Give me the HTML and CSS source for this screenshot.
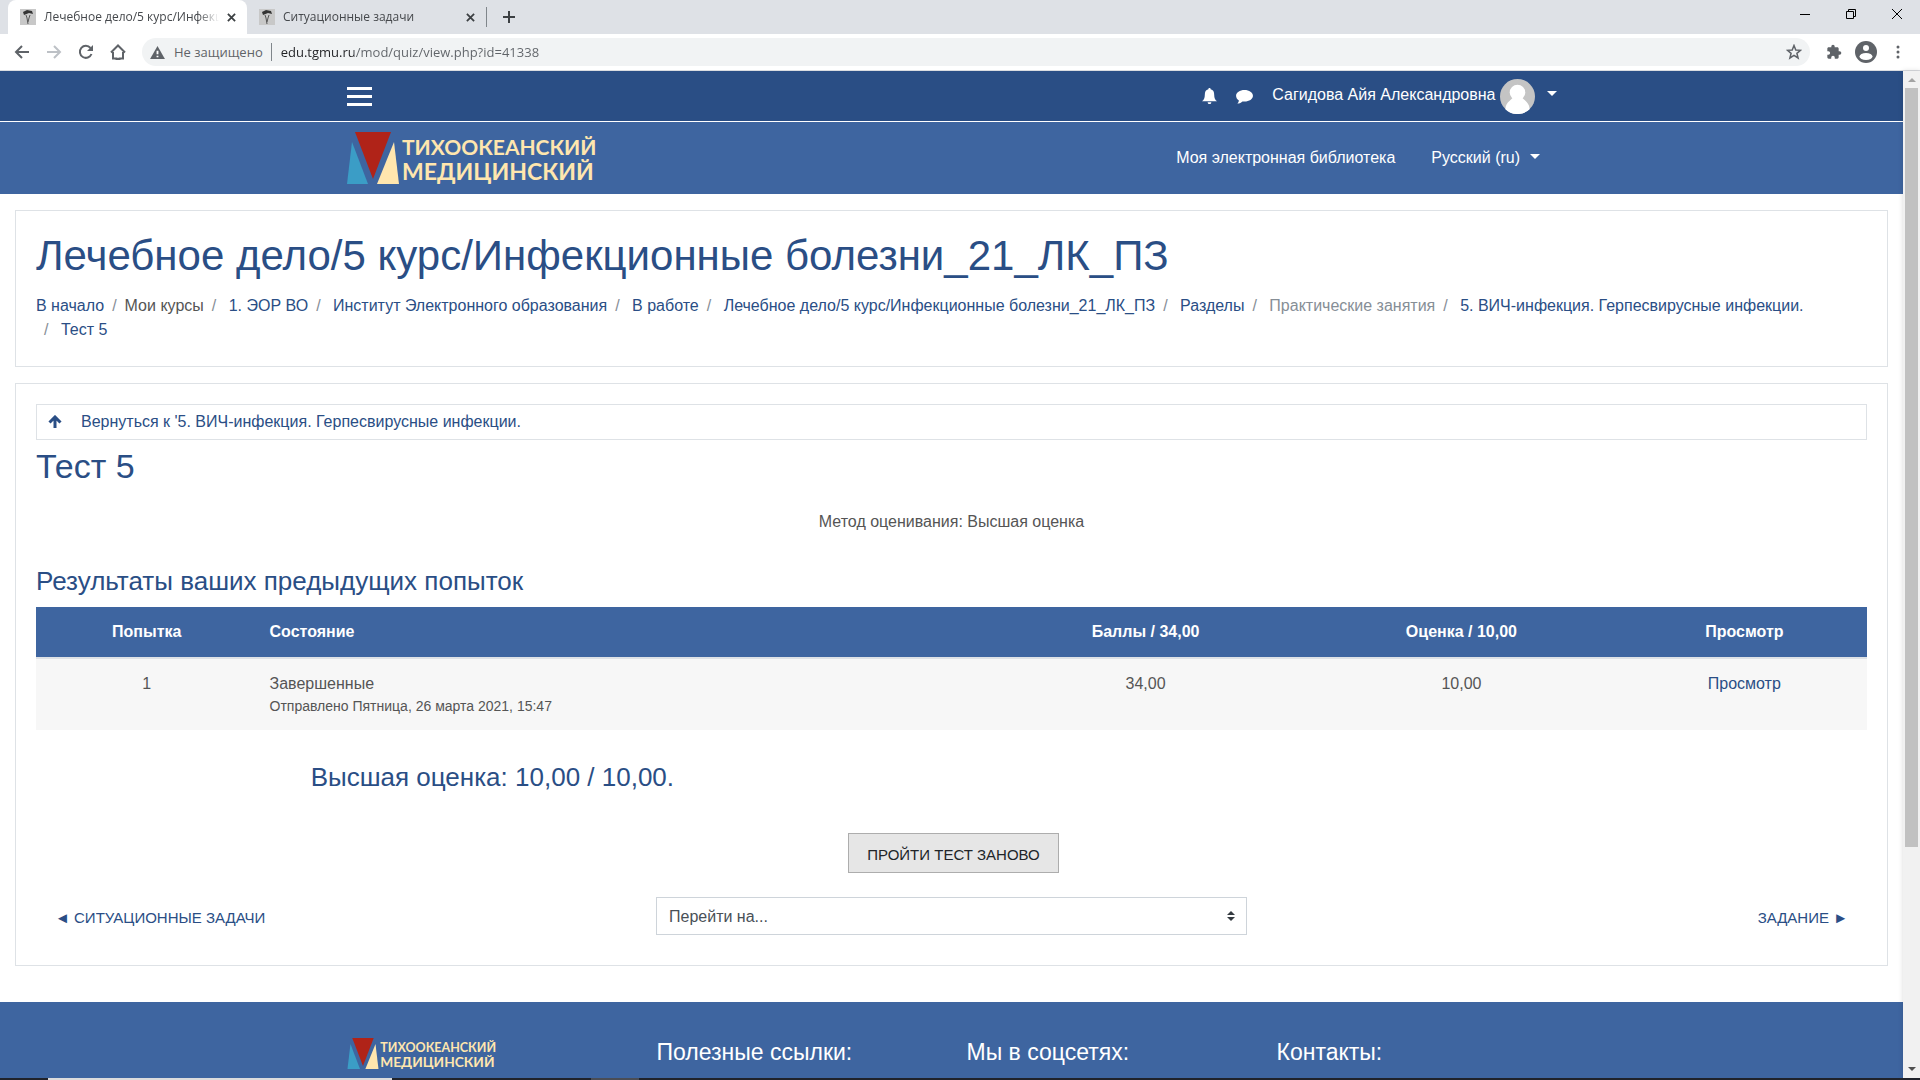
FILE: index.html
```html
<!DOCTYPE html>
<html lang="ru">
<head>
    <meta charset="UTF-8">
    <meta name="viewport" content="width=device-width, initial-scale=1.0">
    <title>Лечебное дело/5 курс/Инфекционные болезни_21_ЛК_ПЗ</title>
    <link rel="stylesheet" href="styles.css">
</head>
<body>
    <!-- Вкладки -->
    <div class="tabs">
        <div class="tab active">
            <svg class="favicon" viewBox="0 0 16 16"><rect width="16" height="16" fill="#c8c8c8"/><path d="M3 3l4-2 5 1 1 3-4-1-5 2z" fill="#333"/><path d="M6 6l1 3 1 6M10 6l-1 3-1 4" fill="none" stroke="#555"/></svg>
            <span class="tab-title">Лечебное дело/5 курс/Инфекци</span>
            <button class="tab-close" aria-label="Закрыть"><svg viewBox="0 0 10 10"><path d="M1 1l8 8M9 1L1 9"/></svg></button>
        </div>
        <div class="tab">
            <svg class="favicon" viewBox="0 0 16 16"><rect width="16" height="16" fill="#c8c8c8"/><path d="M3 3l4-2 5 1 1 3-4-1-5 2z" fill="#333"/><path d="M6 6l1 3 1 6M10 6l-1 3-1 4" fill="none" stroke="#555"/></svg>
            <span class="tab-title">Ситуационные задачи</span>
            <button class="tab-close" aria-label="Закрыть"><svg viewBox="0 0 10 10"><path d="M1 1l8 8M9 1L1 9"/></svg></button>
        </div>
        <button class="tab-new" aria-label="Новая вкладка"><svg viewBox="0 0 12 12"><path d="M6 0v12M0 6h12"/></svg></button>
        <div class="window-buttons">
            <button aria-label="Свернуть"><svg viewBox="0 0 10 10"><path d="M0 5.5h10"/></svg></button>
            <button aria-label="Развернуть"><svg viewBox="0 0 10 10"><path d="M.5 2.5h7v7h-7zM2.5 2.5v-2h7v7h-2"/></svg></button>
            <button aria-label="Закрыть окно"><svg viewBox="0 0 10 10"><path d="M0 0l10 10M10 0L0 10"/></svg></button>
        </div>
    </div>

    <!-- Адресная строка -->
    <div class="toolbar">
        <button aria-label="Назад"><svg viewBox="0 0 16 16"><path d="M15 8H2M8 2L2 8l6 6"/></svg></button>
        <button class="disabled" aria-label="Вперед"><svg viewBox="0 0 16 16"><path d="M1 8h13M8 2l6 6-6 6"/></svg></button>
        <button aria-label="Обновить"><svg viewBox="0 0 16 16"><path d="M13.5 10A6 6 0 1 1 12.500 4"/><path class="fill" d="M15 1v6H9z"/></svg></button>
        <button aria-label="Домой"><svg viewBox="0 0 16 16"><path d="M1 8.500L8 1.500l7 7M3 8v6.500h3.500V15h3v-.5H13V8"/></svg></button>
        <div class="address">
            <svg class="warn" viewBox="0 0 16 14"><path d="M8 0l8 14H0z" fill="#5f6368"/><path d="M8 5v4M8 10.500V12" stroke="#fff" stroke-width="2"/></svg>
            <label for="url">Не защищено</label>
            <input type="text" id="url" value="edu.tgmu.ru/mod/quiz/view.php?id=41338">
            <svg class="star" viewBox="0 0 16 16"><path d="M8 1.500l1.800 4.500 4.700.3-3.600 3 1.200 4.700L8 11.400 3.900 14l1.200-4.700-3.600-3L6.200 6z"/></svg>
        </div>
        <div class="toolbar-right">
            <button aria-label="Расширения"><svg viewBox="0 0 24 24"><path class="fill" d="M20.500 11H19V7c0-1.100-.9-2-2-2h-4V3.500a2.500 2.500 0 0 0-5 0V5H4c-1.100 0-2 .9-2 2v3.800h1.500a2.700 2.700 0 0 1 0 5.400H2V20c0 1.100.9 2 2 2h3.800v-1.500a2.700 2.700 0 0 1 5.400 0V22H17c1.100 0 2-.9 2-2v-4h1.500a2.500 2.500 0 0 0 0-5z"/></svg></button>
            <button class="profile" aria-label="Профиль"><svg viewBox="0 0 22 22"><circle class="fill" cx="11" cy="11" r="11"/><circle cx="11" cy="7" r="3" fill="#fff" stroke="none"/><ellipse cx="11" cy="15.500" rx="6.500" ry="3.500" fill="#fff" stroke="none"/></svg></button>
            <button aria-label="Меню"><svg viewBox="0 0 16 16"><circle class="fill" cx="8" cy="3" r="1.500"/><circle class="fill" cx="8" cy="8" r="1.500"/><circle class="fill" cx="8" cy="13" r="1.500"/></svg></button>
        </div>
    </div>

    <div class="viewport">
        <div class="page">
            <header>
                <div class="topbar">
                    <div class="container">
                        <button class="burger" aria-label="Меню"><span></span><span></span><span></span></button>
                        <div class="user-menu">
                            <a href="#" aria-label="Уведомления"><svg class="bell" viewBox="0 0 16 18"><path d="M8 0c.8 0 1.200.6 1.200 1.300C12 2 13 4 13 7c0 3.500 1 5.500 3 7H0c2-1.500 3-3.500 3-7 0-3 1-5 3.800-5.700C6.800.6 7.200 0 8 0zM6 15h4a2 2 0 0 1-4 0z"/></svg></a>
                            <a href="#" aria-label="Сообщения"><svg class="comment" viewBox="0 0 18 16"><path d="M9 1c5 0 9 2.700 9 6.200s-4 6.200-9 6.200c-.7 0-1.500 0-2.200-.2C5 14.800 3 15.500 1.300 15.500c1-.9 1.500-1.800 1.700-3.300C1.200 11 0 9.200 0 7.200 0 3.700 4 1 9 1z"/></svg></a>
                            <a href="#" class="user">
                                <span>Сагидова Айя Александровна</span>
                                <svg class="avatar" viewBox="0 0 36 36"><circle cx="18" cy="18" r="18" fill="#c4c4c4"/><circle cx="18" cy="14" r="8" fill="#fff"/><path d="M13 19h10c0 2 7 4 7.500 12A18 18 0 0 1 5.500 31C6 23 13 21 13 19z" fill="#fff"/></svg>
                                <i class="caret"></i>
                            </a>
                        </div>
                    </div>
                </div>
                <div class="navbar">
                    <div class="container">
                        <a href="#" class="logo"><svg viewBox="0 0 250 52" role="img">
                            <path d="M5 10l16 42H0z" fill="#3b9dc6"/><path d="M8 0h36L26 47z" fill="#b02318"/><path d="M47 10l5 42H30z" fill="#ffe6ae"/>
                            <text x="55" y="23">ТИХООКЕАНСКИЙ</text><text x="55" y="48" class="second">МЕДИЦИНСКИЙ</text>
                        </svg></a>
                        <nav>
                            <a href="#">Моя электронная библиотека</a>
                            <a href="#">Русский (ru) <i class="caret"></i></a>
                        </nav>
                    </div>
                </div>
            </header>

            <div class="card page-header">
                <h1>Лечебное дело/5 курс/Инфекционные болезни_21_ЛК_ПЗ</h1>
                <ol class="breadcrumb">
                    <li><a href="#">В начало</a></li>
                    <li>Мои курсы</li>
                    <li class="sub"><a href="#">1. ЭОР ВО</a></li>
                    <li class="sub"><a href="#">Институт Электронного образования</a></li>
                    <li class="sub"><a href="#">В работе</a></li>
                    <li class="sub"><a href="#">Лечебное дело/5 курс/Инфекционные болезни_21_ЛК_ПЗ</a></li>
                    <li class="sub"><a href="#">Разделы</a></li>
                    <li class="sub dimmed"><span>Практические занятия</span></li>
                    <li class="sub"><a href="#">5. ВИЧ-инфекция. Герпесвирусные инфекции.</a></li>
                    <li class="sub"><a href="#">Тест 5</a></li>
                </ol>
            </div>

            <main class="card">
                <a href="#" class="back-link">
                    <svg viewBox="0 0 14 14"><path d="M7 13V2M1.500 7.500L7 2l5.500 5.500"/></svg>
                    Вернуться к '5. ВИЧ-инфекция. Герпесвирусные инфекции.
                </a>
                <h2>Тест 5</h2>
                <p class="quiz-info">Метод оценивания: Высшая оценка</p>

                <h3>Результаты ваших предыдущих попыток</h3>
                <table>
                    <thead>
                        <tr>
                            <th class="col-attempt">Попытка</th>
                            <th class="col-state">Состояние</th>
                            <th class="col-marks">Баллы / 34,00</th>
                            <th class="col-grade">Оценка / 10,00</th>
                            <th>Просмотр</th>
                        </tr>
                    </thead>
                    <tbody>
                        <tr>
                            <td>1</td>
                            <td class="col-state">Завершенные<span class="state-details">Отправлено Пятница, 26 марта 2021, 15:47</span></td>
                            <td>34,00</td>
                            <td>10,00</td>
                            <td><a href="#">Просмотр</a></td>
                        </tr>
                    </tbody>
                </table>

                <h3 class="feedback">Высшая оценка: 10,00 / 10,00.</h3>
                <div class="attempt">
                    <button type="submit">Пройти тест заново</button>
                </div>

                <div class="activity-nav">
                    <a href="#">◄ Ситуационные задачи</a>
                    <div class="jump">
                        <select aria-label="Перейти на...">
                            <option>Перейти на...</option>
                        </select>
                        <svg viewBox="0 0 8 10"><path d="M4 0l4 4H0zM4 10L0 6h8z"/></svg>
                    </div>
                    <a href="#" class="next">Задание ►</a>
                </div>
            </main>

            <footer>
                <div class="container">
                    <div class="footer-col">
                        <a href="#" class="logo small"><svg viewBox="0 0 250 52" role="img">
                            <path d="M5 10l16 42H0z" fill="#3b9dc6"/><path d="M8 0h36L26 47z" fill="#b02318"/><path d="M47 10l5 42H30z" fill="#ffe6ae"/>
                            <text x="55" y="23">ТИХООКЕАНСКИЙ</text><text x="55" y="48" class="second">МЕДИЦИНСКИЙ</text>
                        </svg></a>
                    </div>
                    <div class="footer-col"><h4>Полезные ссылки:</h4></div>
                    <div class="footer-col"><h4>Мы в соцсетях:</h4></div>
                    <div class="footer-col"><h4>Контакты:</h4></div>
                </div>
            </footer>
        </div>

        <div class="scrollbar">
            <svg class="up" viewBox="0 0 8 4"><path d="M4 0l4 4H0z"/></svg>
            <div class="track"><div class="thumb"></div></div>
            <svg class="down" viewBox="0 0 8 4"><path d="M0 0h8L4 4z"/></svg>
        </div>
    </div>
    <div class="taskbar"><span class="task-open"></span><span class="task"></span></div>
</body>
</html>
```
FILE: styles.css
```css
* {
    box-sizing: border-box;
}

body {
    display: flex;
    flex-direction: column;
    height: 100vh;
    margin: 0;
    overflow: hidden;
    font-family: "Liberation Sans", Arial, sans-serif;
    font-size: 16px;
    line-height: 24px;
    color: #555;
    background-color: #fff;
}

a {
    color: #2a4e85;
    text-decoration: none;
}

button {
    padding: 0;
    border: none;
    background: none;
    font-family: inherit;
    cursor: pointer;
}

svg {
    display: block;
    flex: none;
}

/* Вкладки браузера */
.tabs {
    display: flex;
    flex: none;
    height: 34px;
    padding-left: 8px;
    background-color: #dee1e6;
    font-family: "Open Sans", "Noto Sans", sans-serif;
    font-size: 12px;
    color: #45484c;
}

.tab {
    display: flex;
    align-items: center;
    width: 239px;
    padding: 0 11px 0 12px;
    border-radius: 8px 8px 0 0;
}

.tab.active {
    background-color: #fff;
}

.favicon {
    width: 16px;
    height: 16px;
    margin-right: 8px;
}

.tab-title {
    flex: 1;
    overflow: hidden;
    white-space: nowrap;
    -webkit-mask-image: linear-gradient(90deg, #000 88%, transparent);
}

.tab-close {
    margin-left: 8px;
}

.tab-close svg {
    width: 9px;
    height: 9px;
    stroke: #3c4043;
    stroke-width: 2;
}

.tab-new {
    align-self: center;
    height: 20px;
    padding-left: 16px;
    border-left: 1px solid #80868b;
}

.tab-new svg {
    width: 12px;
    height: 12px;
    stroke: #3c4043;
    stroke-width: 2;
}

.window-buttons {
    display: flex;
    gap: 36px;
    margin-left: auto;
    padding: 0 18px 6px 0;
}

.window-buttons svg {
    width: 10px;
    height: 10px;
    fill: none;
    stroke: #000;
}

/* Адресная строка */
.toolbar {
    display: flex;
    flex: none;
    align-items: center;
    height: 37px;
    padding: 0 14px;
    gap: 16px;
    border-bottom: 1px solid #dadce0;
    background-color: #fff;
    font-family: "Open Sans", "Noto Sans", sans-serif;
    font-size: 13px;
    color: #5f6368;
}

.toolbar button svg {
    width: 16px;
    height: 16px;
    fill: none;
    stroke: #5f6368;
    stroke-width: 2;
}

.toolbar .disabled svg {
    stroke: #bdc1c6;
}

.toolbar .fill {
    fill: #5f6368;
    stroke: none;
}

.address {
    display: flex;
    flex: 1;
    align-items: center;
    height: 28px;
    padding: 0 8px;
    border-radius: 14px;
    background-color: #f1f3f4;
}

.warn {
    width: 15px;
    height: 13px;
    margin-right: 9px;
}

.address label {
    padding-right: 8px;
    border-right: 1px solid #80868b;
    line-height: 18px;
}

.address input {
    flex: 1;
    padding: 0 9px;
    border: none;
    font: inherit;
    color: #5f6368;
    background: linear-gradient(90deg, #202124 82px, #5f6368 82px);
    -webkit-background-clip: text;
    -webkit-text-fill-color: transparent;
}

.star {
    width: 16px;
    height: 16px;
    fill: none;
    stroke: #5f6368;
    stroke-width: 1.5;
}

.toolbar-right {
    display: flex;
    align-items: center;
    gap: 13px;
}

.toolbar .profile svg {
    width: 22px;
    height: 22px;
}

/* Окно страницы */
.viewport {
    display: flex;
    flex: 1;
    min-height: 0;
}

.page {
    flex: 1;
    min-width: 0;
    overflow: hidden;
}

.container {
    display: flex;
    align-items: center;
    justify-content: space-between;
    max-width: 1240px;
    margin: 0 auto;
    padding: 0 15px;
}

.topbar {
    background-color: #2a4e85;
    border-bottom: 1px solid #fff;
}

.topbar .container {
    height: 50px;
}

.burger {
    display: flex;
    flex-direction: column;
    gap: 5px;
}

.burger span {
    width: 25px;
    height: 3px;
    background-color: #fff;
}

.user-menu,
.user {
    display: flex;
    align-items: center;
}

.user-menu {
    gap: 19px;
}

.user-menu svg {
    fill: #fff;
}

.user {
    gap: 4px;
    color: #fff;
}

.user span {
    padding-bottom: 2px;
}

.bell {
    width: 15px;
    height: 17px;
}

.comment {
    width: 17px;
    height: 15px;
}

.avatar {
    width: 35px;
    height: 35px;
}

.caret {
    display: inline-block;
    margin-left: 5px;
    border: 5px solid transparent;
    border-top-color: #fff;
    border-bottom: none;
    vertical-align: 4px;
}

.user .caret {
    margin: 0 0 6px 8px;
}

.navbar {
    background-color: #3e65a0;
}

.navbar .container {
    height: 72px;
}

.navbar nav {
    display: flex;
    gap: 36px;
    padding-right: 17px;
}

.navbar nav a {
    color: #fff;
}

.logo svg {
    width: 250px;
    height: 52px;
    overflow: visible;
    fill: #ffe6ae;
    font-family: Lato, "Open Sans", sans-serif;
    font-size: 21px;
    font-weight: bold;
}

.logo .second {
    font-size: 23px;
}

.logo.small svg {
    width: 150px;
    height: 31px;
}

.card {
    margin: 16px 15px 0;
    padding: 20px;
    border: 1px solid #dee2e6;
    background-color: #fff;
}

h1, h2, h3, h4 {
    margin: 0;
    font-weight: normal;
    color: #2a4e85;
}

h1 {
    font-size: 42px;
    line-height: 50px;
}

h2 {
    margin-top: 5px;
    font-size: 34px;
    line-height: 42px;
}

h3 {
    font-size: 26px;
    line-height: 31px;
}

.breadcrumb {
    display: flex;
    flex-wrap: wrap;
    margin: 13px 0 4px;
    padding: 0;
    list-style: none;
}

.breadcrumb li + li {
    padding-left: 8px;
}

.breadcrumb li + li::before {
    content: "/";
    padding-right: 8px;
    color: #868e96;
}

.breadcrumb li.sub::before {
    content: "/\00a0";
}

.breadcrumb .dimmed {
    color: #868e96;
}

.back-link {
    display: flex;
    align-items: center;
    gap: 19px;
    height: 36px;
    padding: 0 11px;
    border: 1px solid #dee2e6;
}

.back-link svg {
    width: 14px;
    height: 14px;
    fill: none;
    stroke: #2a4e85;
    stroke-width: 3;
}

.quiz-info {
    margin: 23px 0 32px;
    text-align: center;
}

table {
    width: 100%;
    margin-top: 10px;
    border-spacing: 0;
    table-layout: fixed;
}

th, td {
    padding: 13px 12px;
    text-align: center;
    vertical-align: top;
}

th {
    border-bottom: 2px solid #dee2e6;
    background-color: #3e65a0;
    color: #fff;
}

td {
    background-color: #f7f7f7;
}

.col-attempt {
    width: 12.1%;
}

.col-state {
    width: 40%;
    text-align: left;
}

.col-marks {
    width: 17%;
}

.col-grade {
    width: 17.5%;
}

.state-details {
    display: block;
    font-size: 14px;
    line-height: 21px;
}

.feedback {
    margin: 32px 0 40px 15%;
}

.attempt {
    padding-left: 4px;
    text-align: center;
}

.attempt button {
    height: 40px;
    padding: 2px 18px 0;
    border: 1px solid #adadad;
    background-color: #e6e6e6;
    color: #212529;
    font-size: 15px;
    text-transform: uppercase;
}

.activity-nav {
    display: grid;
    grid-template-columns: 1fr 591px 1fr;
    align-items: center;
    margin: 24px 19px 10px;
    font-size: 15px;
}

.activity-nav a {
    padding-top: 4px;
    text-transform: uppercase;
}

.activity-nav .next {
    text-align: right;
}

.jump {
    position: relative;
}

.jump select {
    display: block;
    width: 100%;
    height: 38px;
    padding: 0 12px;
    border: 1px solid #ced4da;
    border-radius: 0;
    background-color: #fff;
    color: #495057;
    font-family: inherit;
    font-size: 16px;
    -webkit-appearance: none;
    appearance: none;
}

/* стрелки поверх списка */
.jump svg {
    position: absolute;
    top: 14px;
    right: 12px;
    width: 8px;
    height: 10px;
    fill: #343a40;
    pointer-events: none;
}

footer {
    margin-top: 36px;
    padding-bottom: 200px;
    background-color: #3e65a0;
}

footer .container {
    align-items: flex-start;
    padding: 36px 0 0;
}

.footer-col {
    flex: 1;
    padding: 0 15px;
}

footer h4 {
    font-size: 23px;
    line-height: 28px;
    color: #fff;
}

/* Полоса прокрутки */
.scrollbar {
    display: flex;
    flex: none;
    flex-direction: column;
    align-items: center;
    justify-content: space-between;
    width: 17px;
    padding: 7px 0;
    background-color: #f1f1f1;
    box-shadow: 0 0 5px rgba(0, 0, 0, 0.15);
}

.scrollbar svg {
    width: 8px;
    height: 4px;
    fill: #505050;
}

.scrollbar .up {
    fill: #a3a3a3;
}

.track {
    flex: 1;
    width: 13px;
    margin: 6px 0;
}

.thumb {
    height: 78%;
    background-color: #c1c1c1;
}

.taskbar {
    display: flex;
    flex: none;
    height: 2px;
    padding-left: 48px;
    background-color: #20232b;
}

.task-open {
    width: 344px;
    margin-right: 199px;
    background-color: #dcdcdc;
}

.task {
    width: 48px;
    background-color: #4a4d55;
}
```
